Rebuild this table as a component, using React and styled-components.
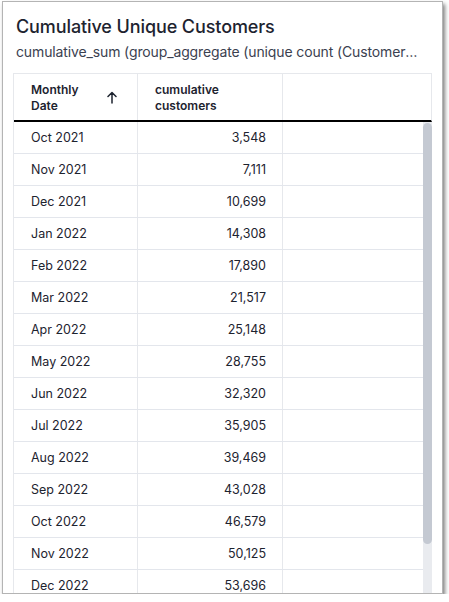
import React from "react";
import styled, { createGlobalStyle } from "styled-components";

const GlobalStyle = createGlobalStyle`
  html, body {
    margin: 0;
    padding: 0;
    background: #ffffff;
  }
  body {
    font-family: Inter, "Noto Sans", sans-serif;
    color: #1d232f;
  }
`;

const Page = styled.div`
  padding: 1px 0 0 2px;
`;

const Card = styled.div`
  width: 441px;
  height: 593px;
  box-sizing: border-box;
  border: 1px solid #b4b4b4;
  box-shadow: 2px 3px 4px rgba(0, 0, 0, 0.5);
  background: #fff;
  display: flex;
  flex-direction: column;
  padding: 13px 0 0 10px;
  overflow: hidden;
`;

const Title = styled.h1`
  margin: 0 0 0 3px;
  font-size: 18px;
  line-height: 24px;
  font-weight: 500;
  letter-spacing: -0.1px;
  color: #1d232f;
`;

const Subtitle = styled.p`
  margin: 3px 0 0 3px;
  font-size: 14px;
  line-height: 20px;
  letter-spacing: -0.13px;
  color: #3b4150;
  width: 405px;
  white-space: nowrap;
  overflow: hidden;
  text-overflow: ellipsis;
`;

const Table = styled.div`
  margin-top: 11px;
  width: 418px;
  flex: 1;
  min-height: 0;
  display: flex;
  flex-direction: column;
  border-left: 1px solid #e6e8ec;
  border-top: 1px solid #e6e8ec;
`;

const HeaderRow = styled.div`
  display: grid;
  grid-template-columns: 124px 145px 1fr;
  height: 46px;
  border-bottom: 2px solid #000;
  border-right: 1px solid #e6e8ec;
`;

const HeaderCell = styled.div`
  display: flex;
  align-items: center;
  justify-content: space-between;
  padding: 1px 20px 0 17px;
  font-size: 12px;
  line-height: 16px;
  font-weight: 600;
  color: #1d232f;
  border-right: ${(p) => (p.$last ? "none" : "1px solid #e6e8ec")};
`;

const Body = styled.div`
  flex: 1;
  min-height: 0;
  display: flex;
`;

const Rows = styled.div`
  flex: 1;
  min-width: 0;
  overflow: hidden;
`;

const ScrollTrack = styled.div`
  width: 9px;
  flex-shrink: 0;
  background: #e9ebef;
  padding-top: 1px;
  box-sizing: border-box;
`;

const ScrollThumb = styled.div`
  height: 421px;
  border-radius: 5px;
  background: #c4c9d2;
`;

const Row = styled.div`
  display: grid;
  grid-template-columns: 124px 145px 1fr;
  height: 32px;
  border-bottom: 1px solid #e3e6ec;
  box-sizing: border-box;
`;

const Cell = styled.div`
  display: flex;
  align-items: center;
  justify-content: ${(p) => (p.$num ? "flex-end" : "flex-start")};
  padding: ${(p) => (p.$num ? "0 16px 0 0" : "0 0 0 17px")};
  font-size: 12.5px;
  color: #1d232f;
  border-right: ${(p) => (p.$last ? "none" : "1px solid #e6e8ec")};
`;

const SortArrow = () => (
  <svg width="10" height="13" viewBox="0 0 10 13" fill="none">
    <path
      d="M5 12V1.5M1 5.5L5 1.5L9 5.5"
      stroke="#1d232f"
      strokeWidth="1.5"
      strokeLinecap="round"
      strokeLinejoin="round"
    />
  </svg>
);

const rows = [
  ["Oct 2021", "3,548"],
  ["Nov 2021", "7,111"],
  ["Dec 2021", "10,699"],
  ["Jan 2022", "14,308"],
  ["Feb 2022", "17,890"],
  ["Mar 2022", "21,517"],
  ["Apr 2022", "25,148"],
  ["May 2022", "28,755"],
  ["Jun 2022", "32,320"],
  ["Jul 2022", "35,905"],
  ["Aug 2022", "39,469"],
  ["Sep 2022", "43,028"],
  ["Oct 2022", "46,579"],
  ["Nov 2022", "50,125"],
  ["Dec 2022", "53,696"],
  ["Jan 2023", "57,241"],
];

export default function App() {
  return (
    <Page>
      <GlobalStyle />
      <Card>
        <Title>Cumulative Unique Customers</Title>
        <Subtitle>
          cumulative_sum (group_aggregate (unique count (Customer),
          query_groups ( ), query_filters ( )))
        </Subtitle>
        <Table>
          <HeaderRow>
            <HeaderCell>
              <span>
                Monthly
                <br />
                Date
              </span>
              <SortArrow />
            </HeaderCell>
            <HeaderCell>
              <span>
                cumulative
                <br />
                customers
              </span>
            </HeaderCell>
            <HeaderCell $last />
          </HeaderRow>
          <Body>
            <Rows>
              {rows.map(([month, value]) => (
                <Row key={month}>
                  <Cell>{month}</Cell>
                  <Cell $num>{value}</Cell>
                  <Cell $last />
                </Row>
              ))}
            </Rows>
            <ScrollTrack>
              <ScrollThumb />
            </ScrollTrack>
          </Body>
        </Table>
      </Card>
    </Page>
  );
}
